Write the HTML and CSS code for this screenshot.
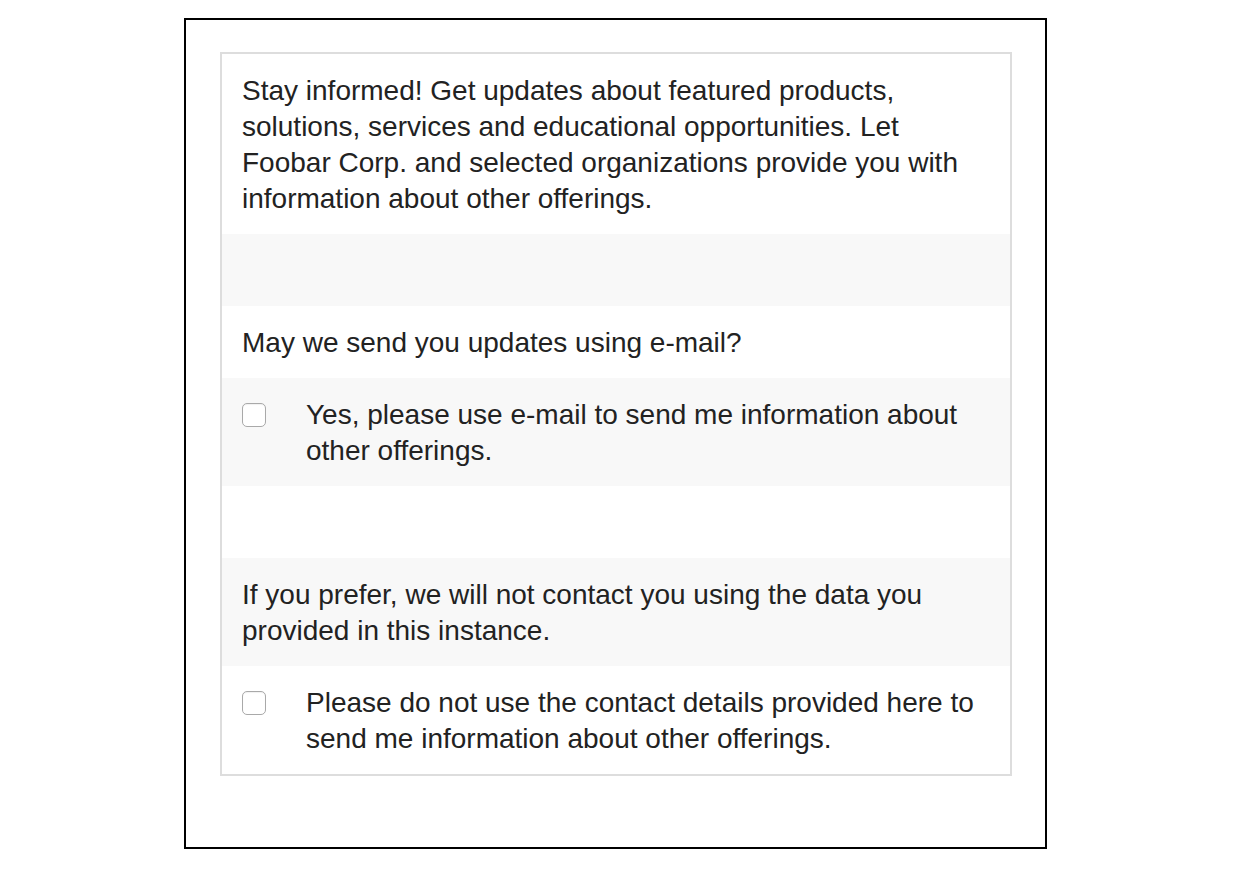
FILE: index.html
```html
<!DOCTYPE html>
<html>
<head>
<meta charset="utf-8">
<link rel="stylesheet" href="styles.css">
</head>
<body>
<div class="frame">
  <div class="panel">
    <div class="row white">
      <p class="text">Stay informed! Get updates about featured products, solutions, services and educational opportunities. Let Foobar Corp. and selected organizations provide you with information about other offerings.</p>
    </div>
    <div class="row gray empty"></div>
    <div class="row white">
      <p class="text">May we send you updates using e-mail?</p>
    </div>
    <div class="row gray check-row">
      <span class="box-cell"><span class="checkbox"></span></span>
      <p class="text">Yes, please use e-mail to send me information about other offerings.</p>
    </div>
    <div class="row white empty"></div>
    <div class="row gray">
      <p class="text">If you prefer, we will not contact you using the data you provided in this instance.</p>
    </div>
    <div class="row white check-row">
      <span class="box-cell"><span class="checkbox"></span></span>
      <p class="text">Please do not use the contact details provided here to send me information about other offerings.</p>
    </div>
  </div>
</div>
</body>
</html>
```
FILE: styles.css
```css
html, body {
  margin: 0;
  padding: 0;
  background: #fff;
}
body {
  font-family: "Liberation Sans", Arial, sans-serif;
  color: #222;
}
.frame {
  box-sizing: border-box;
  width: 863px;
  height: 831px;
  margin: 18px 0 0 184px;
  border: 2px solid #000;
  padding: 32px 33px 0 34px;
}
.panel {
  width: 792px;
  box-sizing: border-box;
  border: 2px solid #ddd;
}
.row {
  padding: 19px 20px 17px;
  font-size: 28px;
  line-height: 36px;
}
.white { background: #fff; }
.gray { background: #f8f8f8; }
.empty { height: 36px; }
.text {
  margin: 0;
}
.check-row {
  display: flex;
}
.check-row .text {
  flex: 1;
}
.box-cell {
  flex: 0 0 64px;
  height: 36px;
  display: flex;
  align-items: center;
}
.checkbox {
  display: block;
  box-sizing: border-box;
  width: 24px;
  height: 24px;
  border: 1px solid #a9a9a9;
  border-radius: 5px;
  background: #fff;
  box-shadow: inset 0 1px 1px rgba(0,0,0,0.06);
}
```
